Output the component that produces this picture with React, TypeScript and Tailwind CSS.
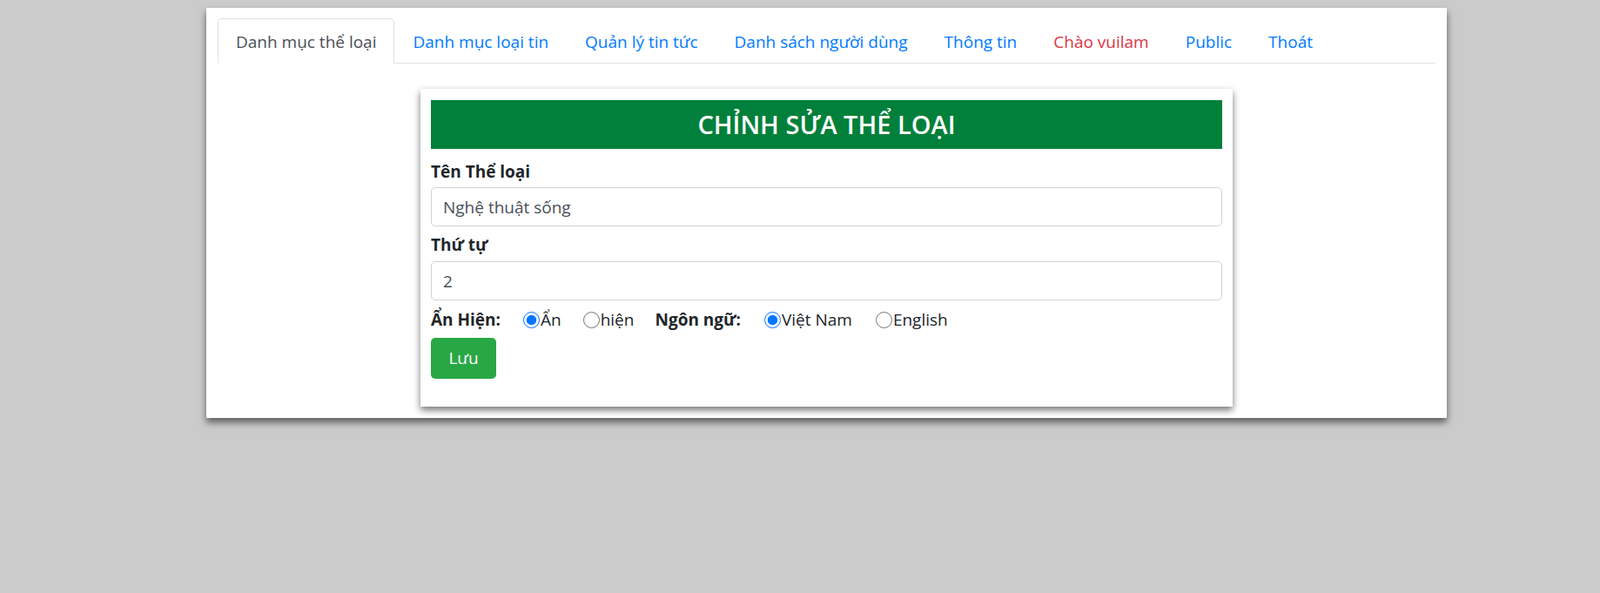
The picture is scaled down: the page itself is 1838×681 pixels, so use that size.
import { useState } from "react";

const tabs = [
  { label: "Danh mục thể loại", active: true },
  { label: "Danh mục loại tin" },
  { label: "Quản lý tin tức" },
  { label: "Danh sách người dùng" },
  { label: "Thông tin" },
  { label: "Chào vuilam", danger: true },
  { label: "Public" },
  { label: "Thoát" },
];

function Radio({
  name,
  label,
  checked,
  onChange,
}: {
  name: string;
  label: string;
  checked: boolean;
  onChange: () => void;
}) {
  return (
    <label className="flex items-center">
      <input
        type="radio"
        name={name}
        checked={checked}
        onChange={onChange}
        className="m-0 w-[19px] h-[19px] accent-[#0075ff]"
      />
      <span className="ml-[1px]">{label}</span>
    </label>
  );
}

export default function App() {
  const [hien, setHien] = useState("an");
  const [lang, setLang] = useState("vi");

  return (
    <div className="min-h-screen bg-[#cbcbcb] pt-[9px] font-['Open_Sans',sans-serif] text-[19px] text-[#212529]">
      <div className="ml-[237px] w-[1425px] bg-white px-[13px] pt-[12px] pb-[13px] shadow-[0_5px_8px_rgba(0,0,0,0.55)]">
        <ul className="flex border-b border-[#dee2e6]">
          {tabs.map((t) => (
            <li key={t.label} className="-mb-px">
              <a
                href="#"
                className={`block px-5 pt-[11px] pb-[9px] leading-[30px] border rounded-t-[5px] ${
                  t.active
                    ? "border-[#dee2e6] border-b-white bg-white text-[#495057]"
                    : t.danger
                    ? "border-transparent text-[#dc3545]"
                    : "border-transparent text-[#007bff]"
                }`}
              >
                {t.label}
              </a>
            </li>
          ))}
        </ul>

        <div className="mx-auto mt-[29px] w-[933px] bg-white px-3 pt-[13px] pb-[32px] shadow-[0_4px_8px_rgba(0,0,0,0.55)]">
          <h3 className="h-[56px] bg-[#00803a] text-white text-[29px] font-semibold flex items-center justify-center">
            CHỈNH SỬA THỂ LOẠI
          </h3>

          <label className="block mt-[11px] leading-[30px] font-bold">Tên Thể loại</label>
          <input
            defaultValue="Nghệ thuật sống"
            className="block mt-[3px] h-[45px] w-full border border-[#ced4da] rounded-[5px] px-[13px] text-[#495057] outline-none"
          />

          <label className="block mt-[6px] leading-[30px] font-bold">Thứ tự</label>
          <input
            defaultValue="2"
            className="block mt-[4px] h-[45px] w-full border border-[#ced4da] rounded-[5px] px-[13px] text-[#495057] outline-none"
          />

          <div className="mt-[7px] h-[30px] flex items-center leading-[30px]">
            <span className="font-bold">Ẩn Hiện:</span>
            <div className="ml-[26px]">
              <Radio name="hien" label="Ẩn" checked={hien === "an"} onChange={() => setHien("an")} />
            </div>
            <div className="ml-[25px]">
              <Radio name="hien" label="hiện" checked={hien === "hien"} onChange={() => setHien("hien")} />
            </div>
            <span className="ml-[24px] font-bold">Ngôn ngữ:</span>
            <div className="ml-[27px]">
              <Radio name="lang" label="Việt Nam" checked={lang === "vi"} onChange={() => setLang("vi")} />
            </div>
            <div className="ml-[27px]">
              <Radio name="lang" label="English" checked={lang === "en"} onChange={() => setLang("en")} />
            </div>
          </div>

          <button className="mt-[6px] h-[47px] w-[75px] bg-[#28a745] text-white rounded-[5px]">Lưu</button>
        </div>
      </div>
    </div>
  );
}
